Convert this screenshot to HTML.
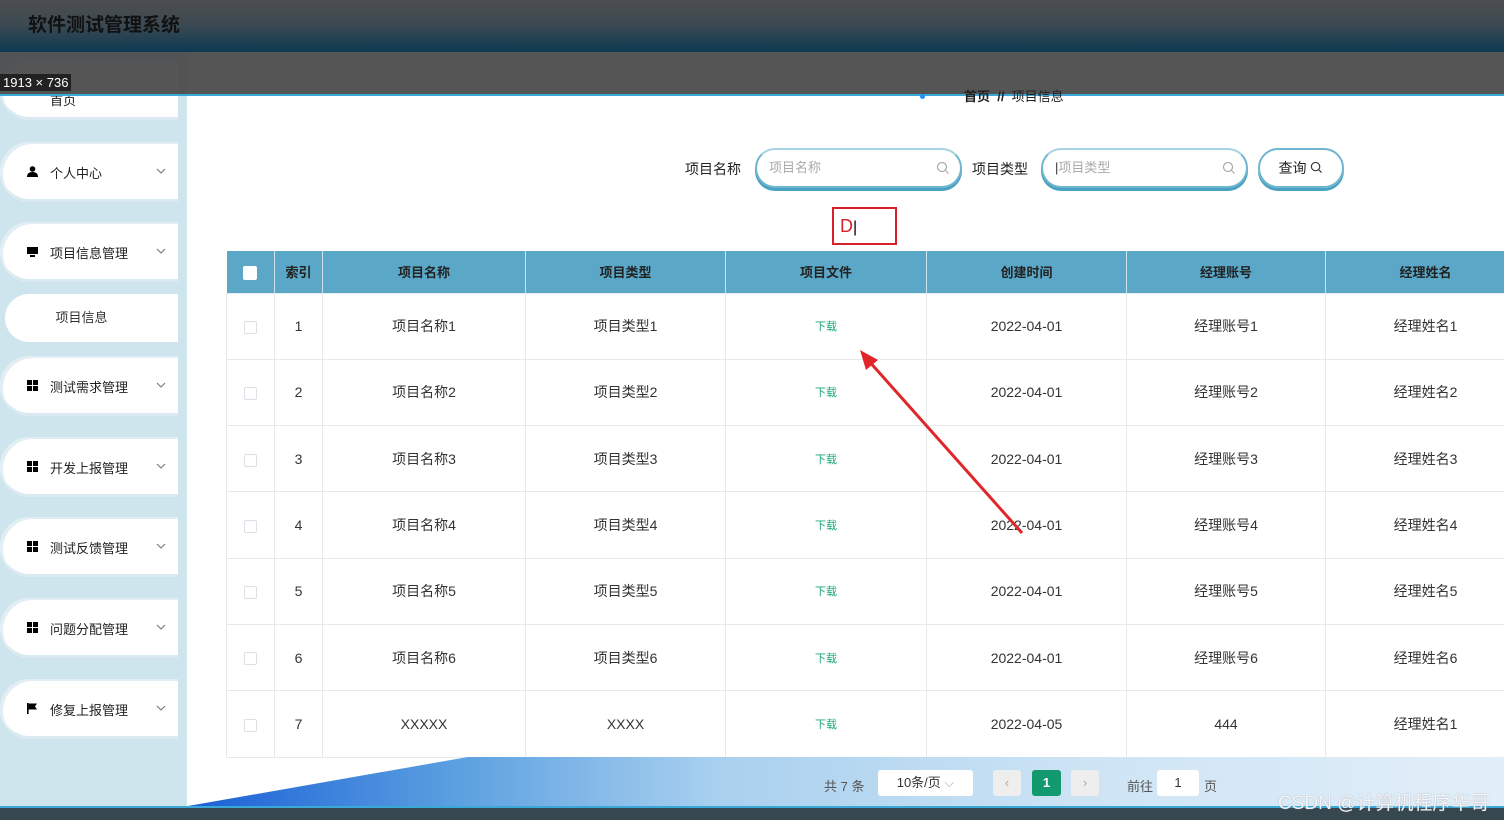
<!DOCTYPE html>
<html><head><meta charset="utf-8"><style>
*{margin:0;padding:0;box-sizing:border-box}
body{width:1504px;height:820px;overflow:hidden;position:relative;background:#fff;font-family:"Liberation Sans","Noto Sans CJK SC",sans-serif;font-size:13px;color:#333}
.hdr{position:absolute;left:0;top:0;width:1504px;height:52px;background:linear-gradient(#4b4d4f,#3e4a52 45%,#0d3a52)}
.hdr h1{position:absolute;left:28px;top:10px;font-size:19px;color:#111;font-weight:bold}
.side{position:absolute;left:0;top:52px;width:187px;height:760px;background:#cfe5ee}
.item{position:absolute;left:0;width:178px;height:60px;background:#fff;border-radius:30px 0 0 30px;box-shadow:inset 3px 2px 0 #e2eef3,inset 0 -3px 0 #dbeaf0;font-size:13px;color:#222}
.item .ic{position:absolute;left:27px;top:24px;width:11px;height:11px}
.item .t{position:absolute;left:50px;top:21px}
.item .ar{position:absolute;left:156px;top:26px;width:10px;height:6px}
.sub{position:absolute;left:5px;width:173px;height:48px;background:#fff;border-radius:24px 0 0 24px;text-align:center;line-height:48px;padding-right:20px}
.band{position:absolute;left:0;top:52px;width:1504px;height:44px;background:rgba(72,72,72,.93);border-bottom:2px solid #3aa9d8}
.tag{position:absolute;left:0;top:74px;background:#222;color:#fff;font-size:13px;padding:0 3px;height:17px;line-height:17px}
.bc{position:absolute;left:964px;top:86px;font-size:13px;color:#222;font-weight:bold}
.dot{position:absolute;left:920px;top:94px;width:5px;height:5px;background:#1e90ff;border-radius:50%}
.lbl{position:absolute;top:159px;font-size:14px;color:#222}
.inp{position:absolute;top:148px;height:40px;border-radius:20px;background:#fff;border:2px solid #6eb6cf;border-top-color:#a8d3e3;box-shadow:0 3px 0 #4aa1c2;color:#aaa;font-size:13px;line-height:36px;padding-left:12px}
.inp svg{position:absolute;right:10px;top:11px}
.btn{position:absolute;left:1258px;top:148px;width:86px;height:40px;border-radius:20px;border:2px solid #6eb6cf;box-shadow:0 3px 0 #4aa1c2;text-align:center;line-height:36px;font-size:14px;color:#222}
.red{position:absolute;left:832px;top:207px;width:65px;height:38px;border:2px solid #d8202a;color:#d8202a;font-size:18px;padding-left:6px;line-height:34px}
table{position:absolute;left:226px;top:251px;border-collapse:collapse;table-layout:fixed;width:1299px}
th{background:#5aa7c7;height:42px;font-size:13px;color:#222;border-right:1px solid #cfe3ec;font-weight:bold}
td{height:66.3px;border:1px solid #e6e9ed;text-align:center;font-size:14px;color:#333}
.cb{display:inline-block;width:13px;height:13px;border:1px solid #dcdfe6;background:#fff;border-radius:2px;vertical-align:middle}
th .cb{border-color:#fff;width:14px;height:14px}
.dl{color:#1aa57a;font-size:11px}
.foot{position:absolute;left:188px;top:757px;width:1316px;height:49px;background:linear-gradient(90deg,#1a5fd6 0%,#5a9fe0 20%,#a9d0ef 40%,#cfe5f5 70%,#e2eff9 100%);clip-path:polygon(0 100%,280px 0,100% 0,100% 100%)}
.bot{position:absolute;left:0;top:806px;width:1504px;height:14px;background:#37474f;border-top:2px solid #3aa9d8}
.pg{position:absolute;top:776px;font-size:13px;color:#555}
.box{position:absolute;top:770px;height:26px;background:#fff;border-radius:3px;text-align:center;line-height:26px;font-size:13px}
.wm{position:absolute;left:1278px;top:788px;font-size:19px;color:rgba(255,255,255,.9);text-shadow:0 0 1px #889}
.arrow{position:absolute;left:0;top:0}
</style></head><body>
<div class="hdr"><h1>软件测试管理系统</h1></div>
<svg width="0" height="0" style="position:absolute"><defs><symbol id="ch" viewBox="0 0 10 6"><path d="M1 1 L5 5 L9 1" fill="none" stroke="#777" stroke-width="1.1"/></symbol><symbol id="g4" viewBox="0 0 11 11"><rect width="5" height="5"/><rect x="6" width="5" height="5"/><rect y="6" width="5" height="5"/><rect x="6" y="6" width="5" height="5"/></symbol></defs></svg>
<div class="side">
<div class="item" style="top:8px"><span class="t" style="top:30px">首页</span></div>
<div class="item" style="top:90px"><svg class="ic" viewBox="0 0 11 11"><circle cx="5.5" cy="3" r="2.8"/><path d="M0 11 Q0 6 5.5 6 Q11 6 11 11z"/></svg><span class="t">个人中心</span><svg class="ar"><use href="#ch"/></svg></div>
<div class="item" style="top:170px"><svg class="ic" viewBox="0 0 11 11"><rect x="0" y="1" width="11" height="7"/><rect x="3" y="9" width="5" height="2"/></svg><span class="t">项目信息管理</span><svg class="ar"><use href="#ch"/></svg></div>
<div class="sub" style="top:242px">项目信息</div>
<div class="item" style="top:304px"><svg class="ic"><use href="#g4"/></svg><span class="t">测试需求管理</span><svg class="ar"><use href="#ch"/></svg></div>
<div class="item" style="top:385px"><svg class="ic"><use href="#g4"/></svg><span class="t">开发上报管理</span><svg class="ar"><use href="#ch"/></svg></div>
<div class="item" style="top:465px"><svg class="ic"><use href="#g4"/></svg><span class="t">测试反馈管理</span><svg class="ar"><use href="#ch"/></svg></div>
<div class="item" style="top:546px"><svg class="ic"><use href="#g4"/></svg><span class="t">问题分配管理</span><svg class="ar"><use href="#ch"/></svg></div>
<div class="item" style="top:627px"><svg class="ic" viewBox="0 0 11 11"><rect x="0" y="0" width="1.6" height="11"/><path d="M1.6 0.5 H10 L8 3.5 L10 6.5 H1.6z"/></svg><span class="t">修复上报管理</span><svg class="ar"><use href="#ch"/></svg></div>
</div>
<div class="band"></div>
<div class="tag">1913 × 736</div>
<div class="dot"></div>
<div class="bc">首页 &nbsp;// &nbsp;<span style="font-weight:normal">项目信息</span></div>
<div class="lbl" style="left:685px">项目名称</div>
<div class="inp" style="left:755px;width:207px">项目名称<svg width="14" height="14" viewBox="0 0 14 14"><circle cx="6" cy="6" r="4.5" fill="none" stroke="#aaa" stroke-width="1.2"/><path d="M9.5 9.5 L12.5 12.5" stroke="#aaa" stroke-width="1.2"/></svg></div>
<div class="lbl" style="left:972px">项目类型</div>
<div class="inp" style="left:1041px;width:207px"><span style="color:#333">|</span>项目类型<svg width="14" height="14" viewBox="0 0 14 14"><circle cx="6" cy="6" r="4.5" fill="none" stroke="#aaa" stroke-width="1.2"/><path d="M9.5 9.5 L12.5 12.5" stroke="#aaa" stroke-width="1.2"/></svg></div>
<div class="btn">查询 <svg width="13" height="13" viewBox="0 0 14 14" style="vertical-align:-1px"><circle cx="6" cy="6" r="4.5" fill="none" stroke="#333" stroke-width="1.2"/><path d="M9.5 9.5 L12.5 12.5" stroke="#333" stroke-width="1.2"/></svg></div>
<div class="red">D<span style="color:#000;font-size:16px">|</span></div>
<table>
<colgroup><col style="width:48px"><col style="width:48px"><col style="width:203px"><col style="width:200px"><col style="width:201px"><col style="width:200px"><col style="width:199px"><col style="width:200px"></colgroup>
<tr><th><span class="cb"></span></th><th>索引</th><th>项目名称</th><th>项目类型</th><th>项目文件</th><th>创建时间</th><th>经理账号</th><th>经理姓名</th></tr>
<tr><td><span class="cb"></span></td><td>1</td><td>项目名称1</td><td>项目类型1</td><td class="dl">下载</td><td>2022-04-01</td><td>经理账号1</td><td>经理姓名1</td></tr>
<tr><td><span class="cb"></span></td><td>2</td><td>项目名称2</td><td>项目类型2</td><td class="dl">下载</td><td>2022-04-01</td><td>经理账号2</td><td>经理姓名2</td></tr>
<tr><td><span class="cb"></span></td><td>3</td><td>项目名称3</td><td>项目类型3</td><td class="dl">下载</td><td>2022-04-01</td><td>经理账号3</td><td>经理姓名3</td></tr>
<tr><td><span class="cb"></span></td><td>4</td><td>项目名称4</td><td>项目类型4</td><td class="dl">下载</td><td>2022-04-01</td><td>经理账号4</td><td>经理姓名4</td></tr>
<tr><td><span class="cb"></span></td><td>5</td><td>项目名称5</td><td>项目类型5</td><td class="dl">下载</td><td>2022-04-01</td><td>经理账号5</td><td>经理姓名5</td></tr>
<tr><td><span class="cb"></span></td><td>6</td><td>项目名称6</td><td>项目类型6</td><td class="dl">下载</td><td>2022-04-01</td><td>经理账号6</td><td>经理姓名6</td></tr>
<tr><td><span class="cb"></span></td><td>7</td><td>XXXXX</td><td>XXXX</td><td class="dl">下载</td><td>2022-04-05</td><td>444</td><td>经理姓名1</td></tr>
</table>
<svg class="arrow" width="1504" height="820"><line x1="1022" y1="533" x2="868" y2="360" stroke="#e0262b" stroke-width="3"/><path d="M860 350 L878 360 L866 370z" fill="#e0262b"/></svg>
<div class="foot"></div>
<div class="pg" style="left:824px">共 7 条</div>
<div class="box" style="left:878px;width:95px">10条/页 <span style="color:#aaa">⌵</span></div>
<div class="box" style="left:993px;width:28px;background:#eee;color:#aaa">‹</div>
<div class="box" style="left:1032px;width:29px;background:#129a6e;color:#fff;font-weight:bold">1</div>
<div class="box" style="left:1071px;width:28px;background:#eee;color:#aaa">›</div>
<div class="pg" style="left:1127px">前往</div>
<div class="box" style="left:1157px;width:42px">1</div>
<div class="pg" style="left:1204px">页</div>
<div class="bot"></div>
<div class="wm">CSDN @计算机程序华哥</div>
</body></html>
